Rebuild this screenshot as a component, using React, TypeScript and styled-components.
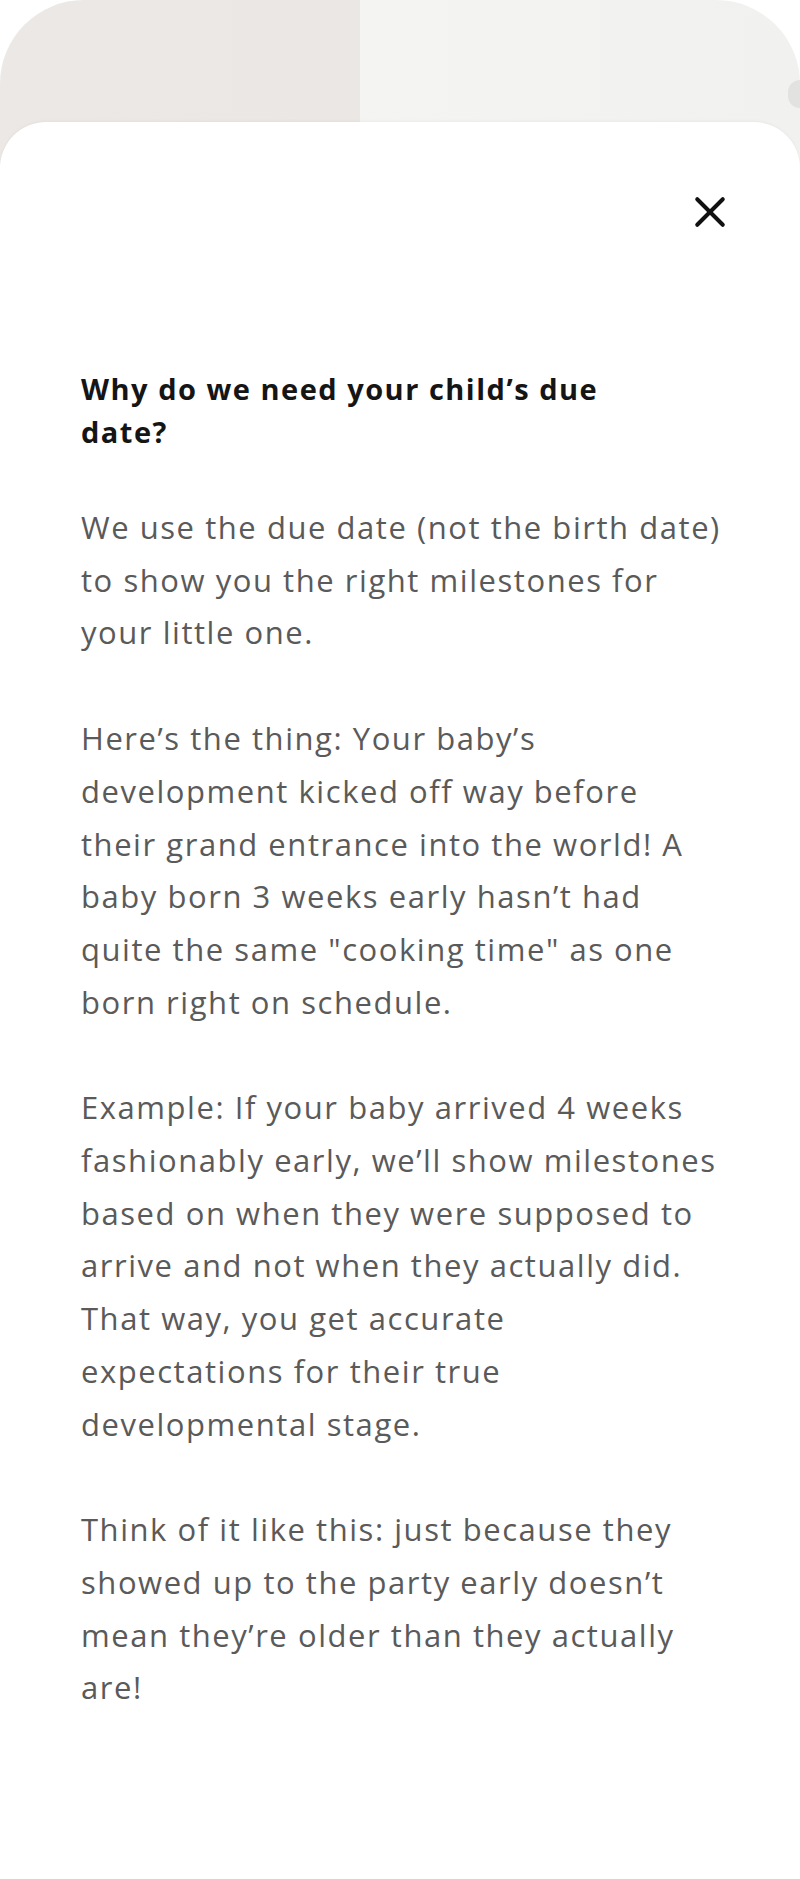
import React from 'react';
import styled, { createGlobalStyle } from 'styled-components';

const GlobalStyle = createGlobalStyle`
  html, body {
    margin: 0;
    padding: 0;
    background: #ffffff;
  }
  body {
    font-family: "Open Sans", "Noto Sans", Arial, sans-serif;
    -webkit-font-smoothing: antialiased;
  }
`;

const Screen = styled.div`
  width: 800px;
  min-height: 1879px;
  overflow: hidden;
  background: #ffffff;
`;

// the screen peeking out behind the sheet
const Backdrop = styled.div`
  position: relative;
  height: 190px;
  border-radius: 84px 84px 0 0;
  background: linear-gradient(
    90deg,
    #ece8e5 0%,
    #ebe7e4 45%,
    #f4f4f3 45%,
    #f1f1f0 100%
  );

  &::after {
    content: '';
    position: absolute;
    right: -12px;
    top: 80px;
    width: 24px;
    height: 28px;
    border-radius: 12px;
    background: #e2e2e1;
  }
`;

const Sheet = styled.section`
  position: relative;
  margin-top: -68px;
  min-height: 1757px;
  background: #ffffff;
  border-radius: 46px 46px 0 0;
  box-shadow: 0 -1px 3px rgba(0, 0, 0, 0.04);
  padding: 0 40px 0 81px;
  box-sizing: border-box;
`;

const Header = styled.div`
  display: flex;
  justify-content: flex-end;
  padding-top: 72px;
  margin-right: 32px;
`;

const CloseButton = styled.button`
  width: 36px;
  height: 36px;
  padding: 0;
  border: none;
  background: transparent;
  display: flex;
  align-items: center;
  justify-content: center;
  cursor: pointer;
  color: #111111;
`;

const Title = styled.h2`
  margin: 137px 0 0;
  font-size: 29px;
  line-height: 43px;
  font-weight: 700;
  letter-spacing: 1.5px;
  color: #151515;
`;

const Body = styled.div`
  margin-top: 48px;
`;

const Paragraph = styled.p`
  margin: 0 0 53px;
  font-size: 31px;
  line-height: 52.7px;
  font-weight: 400;
  letter-spacing: 1.55px;
  color: #5a5a5a;
`;

// lines as they break on the device
const paragraphs: string[][] = [
  [
    'We use the due date (not the birth date)',
    'to show you the right milestones for',
    'your little one.',
  ],
  [
    'Here\u2019s the thing: Your baby\u2019s',
    'development kicked off way before',
    'their grand entrance into the world! A',
    'baby born 3 weeks early hasn\u2019t had',
    'quite the same "cooking time" as one',
    'born right on schedule.',
  ],
  [
    'Example: If your baby arrived 4 weeks',
    'fashionably early, we\u2019ll show milestones',
    'based on when they were supposed to',
    'arrive and not when they actually did.',
    'That way, you get accurate',
    'expectations for their true',
    'developmental stage.',
  ],
  [
    'Think of it like this: just because they',
    'showed up to the party early doesn\u2019t',
    'mean they\u2019re older than they actually',
    'are!',
  ],
];

const Lines = ({ lines }: { lines: string[] }) => (
  <>
    {lines.map((line, i) => (
      <React.Fragment key={i}>
        {i > 0 && <br />}
        {line}
      </React.Fragment>
    ))}
  </>
);

export default function App() {
  return (
    <>
      <GlobalStyle />
      <Screen>
        <Backdrop />
        <Sheet>
          <Header>
            <CloseButton aria-label="Close">
              <svg width="36" height="36" viewBox="0 0 24 24" fill="none" stroke="currentColor" strokeWidth="2.7" strokeLinecap="round">
                <path d="M3.5 3.5L20.5 20.5" />
                <path d="M20.5 3.5L3.5 20.5" />
              </svg>
            </CloseButton>
          </Header>
          <Title>
            <Lines lines={['Why do we need your child\u2019s due', 'date?']} />
          </Title>
          <Body>
            {paragraphs.map((lines, i) => (
              <Paragraph key={i}>
                <Lines lines={lines} />
              </Paragraph>
            ))}
          </Body>
        </Sheet>
      </Screen>
    </>
  );
}
